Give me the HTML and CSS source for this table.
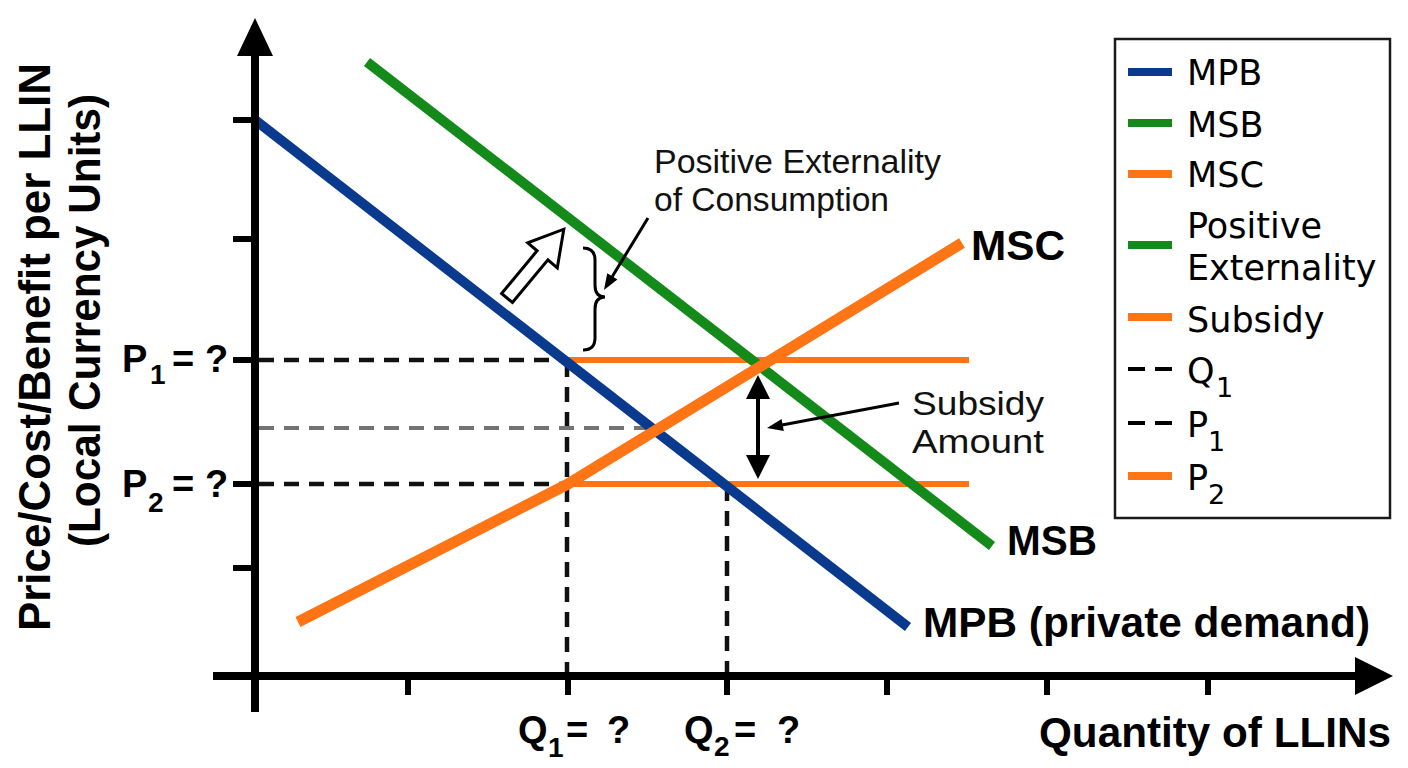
FILE: index.html
```html
<!DOCTYPE html>
<html lang="en">
<head>
<meta charset="utf-8">
<title>Positive Externality of Consumption – LLIN Subsidy</title>
<link rel="stylesheet" href="styles.css">
</head>
<body>
<figure class="chart">
<svg class="chart-svg" width="1408" height="768" viewBox="0 0 1408 768" xmlns="http://www.w3.org/2000/svg">
  <!-- guide lines -->
  <g class="dash">
    <line x1="259" y1="360" x2="567" y2="360"/>
    <line x1="259" y1="484" x2="567" y2="484"/>
    <line x1="567" y1="362" x2="567" y2="676"/>
    <line x1="727" y1="486" x2="727" y2="676"/>
  </g>
  <line class="dash-gray" x1="259" y1="428" x2="648" y2="428"/>

  <!-- subsidy price lines -->
  <line class="price-line" x1="568" y1="360" x2="969" y2="360"/>
  <line class="price-line" x1="568" y1="484" x2="969" y2="484"/>

  <!-- curves -->
  <line class="curve mpb" x1="255" y1="120" x2="908" y2="627"/>
  <line class="curve msb" x1="367" y1="62" x2="992" y2="546"/>
  <polyline class="curve msc" points="298,622 568,484 962,243"/>

  <!-- axes -->
  <g class="axis">
    <line x1="255" y1="45" x2="255" y2="712"/>
    <line x1="213" y1="676" x2="1360" y2="676"/>
  </g>
  <polygon class="axis-head" points="237,56 255,18 273,56"/>
  <polygon class="axis-head" points="1355,657 1393,676 1355,695"/>
  <g class="tick">
    <line x1="233" y1="120" x2="255" y2="120"/>
    <line x1="233" y1="239" x2="255" y2="239"/>
    <line x1="233" y1="360" x2="255" y2="360"/>
    <line x1="233" y1="484" x2="255" y2="484"/>
    <line x1="233" y1="568" x2="255" y2="568"/>
    <line x1="408" y1="676" x2="408" y2="695"/>
    <line x1="568" y1="676" x2="568" y2="695"/>
    <line x1="727" y1="676" x2="727" y2="695"/>
    <line x1="887" y1="676" x2="887" y2="695"/>
    <line x1="1047" y1="676" x2="1047" y2="695"/>
    <line x1="1208" y1="676" x2="1208" y2="695"/>
  </g>

  <!-- annotations -->
  <polygon class="hollow-arrow" points="512.4,302.5 547.9,259.8 557.3,267.8 563.8,229.2 527.7,242.8 537.1,250.8 501.6,293.5"/>
  <path class="brace" d="M583,248 Q595,248 595,260 L595,285 Q595,297 605,297 Q595,297 595,309 L595,338 Q595,350 583,350"/>
  <line class="thin" x1="648" y1="218" x2="612" y2="277"/>
  <polygon class="head" points="604,290 617.4,279.5 607.2,273.3"/>
  <line class="thin" x1="899" y1="403" x2="782" y2="425"/>
  <polygon class="head" points="767,428 783.8,430.9 781.6,419.1"/>
  <line class="double" x1="758" y1="395" x2="758" y2="459"/>
  <polygon class="head" points="758,375 746,399 770,399"/>
  <polygon class="head" points="758,479 746,455 770,455"/>

  <text class="note" x="654" y="173" textLength="287" lengthAdjust="spacingAndGlyphs">Positive Externality</text>
  <text class="note" x="654" y="211" textLength="235" lengthAdjust="spacingAndGlyphs">of Consumption</text>
  <text class="note" x="912" y="415" textLength="132" lengthAdjust="spacingAndGlyphs">Subsidy</text>
  <text class="note" x="912" y="453" textLength="132" lengthAdjust="spacingAndGlyphs">Amount</text>

  <!-- curve labels -->
  <text class="label" x="971" y="260" textLength="94" lengthAdjust="spacingAndGlyphs">MSC</text>
  <text class="label" x="1007" y="555" textLength="90" lengthAdjust="spacingAndGlyphs">MSB</text>
  <text class="label" x="923" y="637" textLength="447" lengthAdjust="spacingAndGlyphs">MPB (private demand)</text>

  <!-- axis labels -->
  <text class="axis-title" transform="translate(50,631) rotate(-90)" textLength="568" lengthAdjust="spacingAndGlyphs">Price/Cost/Benefit per LLIN</text>
  <text class="axis-title" transform="translate(100,547) rotate(-90)" textLength="453" lengthAdjust="spacingAndGlyphs">(Local Currency Units)</text>
  <text class="label" x="1039" y="747" textLength="352" lengthAdjust="spacingAndGlyphs">Quantity of LLINs</text>

  <text class="tick-label"><tspan x="122" y="372">P</tspan><tspan class="sub" x="150" y="384">1</tspan><tspan x="172" y="372">=</tspan><tspan x="205" y="372">?</tspan></text>
  <text class="tick-label"><tspan x="122" y="497">P</tspan><tspan class="sub" x="148" y="512">2</tspan><tspan x="172" y="497">=</tspan><tspan x="205" y="497">?</tspan></text>
  <text class="tick-label"><tspan x="518" y="743">Q</tspan><tspan class="sub" x="548" y="757">1</tspan><tspan x="566" y="743">=</tspan><tspan x="607" y="743">?</tspan></text>
  <text class="tick-label"><tspan x="684" y="743">Q</tspan><tspan class="sub" x="714" y="756">2</tspan><tspan x="734" y="743">=</tspan><tspan x="777" y="743">?</tspan></text>

  <!-- legend -->
  <g class="legend">
    <rect class="legend-box" x="1115" y="39" width="275" height="479"/>
    <line class="swatch mpb-s" x1="1128" y1="72" x2="1172" y2="72"/>
    <line class="swatch msb-s" x1="1128" y1="123" x2="1172" y2="123"/>
    <line class="swatch msc-s" x1="1128" y1="174" x2="1172" y2="174"/>
    <line class="swatch msb-s" x1="1128" y1="245" x2="1172" y2="245"/>
    <line class="swatch msc-s" x1="1128" y1="317" x2="1172" y2="317"/>
    <line class="swatch-dash" x1="1128" y1="369" x2="1145" y2="369"/>
    <line class="swatch-dash" x1="1155" y1="369" x2="1172" y2="369"/>
    <line class="swatch-dash" x1="1128" y1="423" x2="1145" y2="423"/>
    <line class="swatch-dash" x1="1155" y1="423" x2="1172" y2="423"/>
    <line class="swatch msc-s" x1="1128" y1="476" x2="1172" y2="476"/>
    <text class="legend-text" x="1187" y="85">MPB</text>
    <text class="legend-text" x="1187" y="137">MSB</text>
    <text class="legend-text" x="1187" y="187">MSC</text>
    <text class="legend-text" x="1187" y="238">Positive</text>
    <text class="legend-text" x="1187" y="280">Externality</text>
    <text class="legend-text" x="1187" y="332">Subsidy</text>
    <text class="legend-text"><tspan x="1187" y="383">Q</tspan><tspan class="legend-sub" x="1216" y="397">1</tspan></text>
    <text class="legend-text"><tspan x="1187" y="437">P</tspan><tspan class="legend-sub" x="1208" y="451">1</tspan></text>
    <text class="legend-text"><tspan x="1187" y="490">P</tspan><tspan class="legend-sub" x="1208" y="504">2</tspan></text>
  </g>
</svg>
</figure>
</body>
</html>
```

FILE: styles.css
```css
html, body {
  margin: 0;
  padding: 0;
  background: #ffffff;
}

.chart {
  margin: 0;
  width: 1408px;
  height: 768px;
}

.chart-svg {
  display: block;
}

.dash line {
  stroke: #111111;
  stroke-width: 4.5;
  stroke-dasharray: 15 10;
}

.dash-gray {
  stroke: #737373;
  stroke-width: 4;
  stroke-dasharray: 15 10;
}

.price-line {
  stroke: #ff7414;
  stroke-width: 6;
}

.curve {
  fill: none;
  stroke-width: 10;
  stroke-linecap: butt;
  stroke-linejoin: round;
}

.mpb { stroke: #0a3a8e; }
.msb { stroke: #138a1a; }
.msc { stroke: #ff7414; stroke-width: 11; }

.axis line {
  stroke: #000000;
  stroke-width: 8;
}

.axis-head,
.head {
  fill: #000000;
}

.tick line {
  stroke: #000000;
  stroke-width: 6;
}

.hollow-arrow {
  fill: #ffffff;
  stroke: #000000;
  stroke-width: 3;
  stroke-linejoin: miter;
}

.brace {
  fill: none;
  stroke: #000000;
  stroke-width: 3;
}

.thin {
  stroke: #000000;
  stroke-width: 3;
}

.double {
  stroke: #000000;
  stroke-width: 4;
}

.note {
  font-family: "Liberation Sans", Arial, sans-serif;
  font-size: 33px;
  fill: #111111;
}

.label {
  font-family: "Liberation Sans", Arial, sans-serif;
  font-weight: 700;
  font-size: 42px;
  fill: #000000;
}

.axis-title {
  font-family: "Liberation Sans", Arial, sans-serif;
  font-weight: 700;
  font-size: 44px;
  fill: #000000;
}

.tick-label {
  font-family: "Liberation Sans", Arial, sans-serif;
  font-weight: 700;
  font-size: 38px;
  fill: #000000;
}

.tick-label .sub {
  font-size: 28px;
}

.legend-box {
  fill: #ffffff;
  stroke: #1a1a1a;
  stroke-width: 2.5;
}

.swatch {
  stroke-width: 8;
}

.mpb-s { stroke: #0a3a8e; }
.msb-s { stroke: #138a1a; }
.msc-s { stroke: #ff7414; }

.swatch-dash {
  stroke: #000000;
  stroke-width: 4;
}

.legend-text {
  font-family: "DejaVu Sans", Verdana, sans-serif;
  font-size: 35px;
  fill: #000000;
}

.legend-text .legend-sub {
  font-size: 27px;
}
```
